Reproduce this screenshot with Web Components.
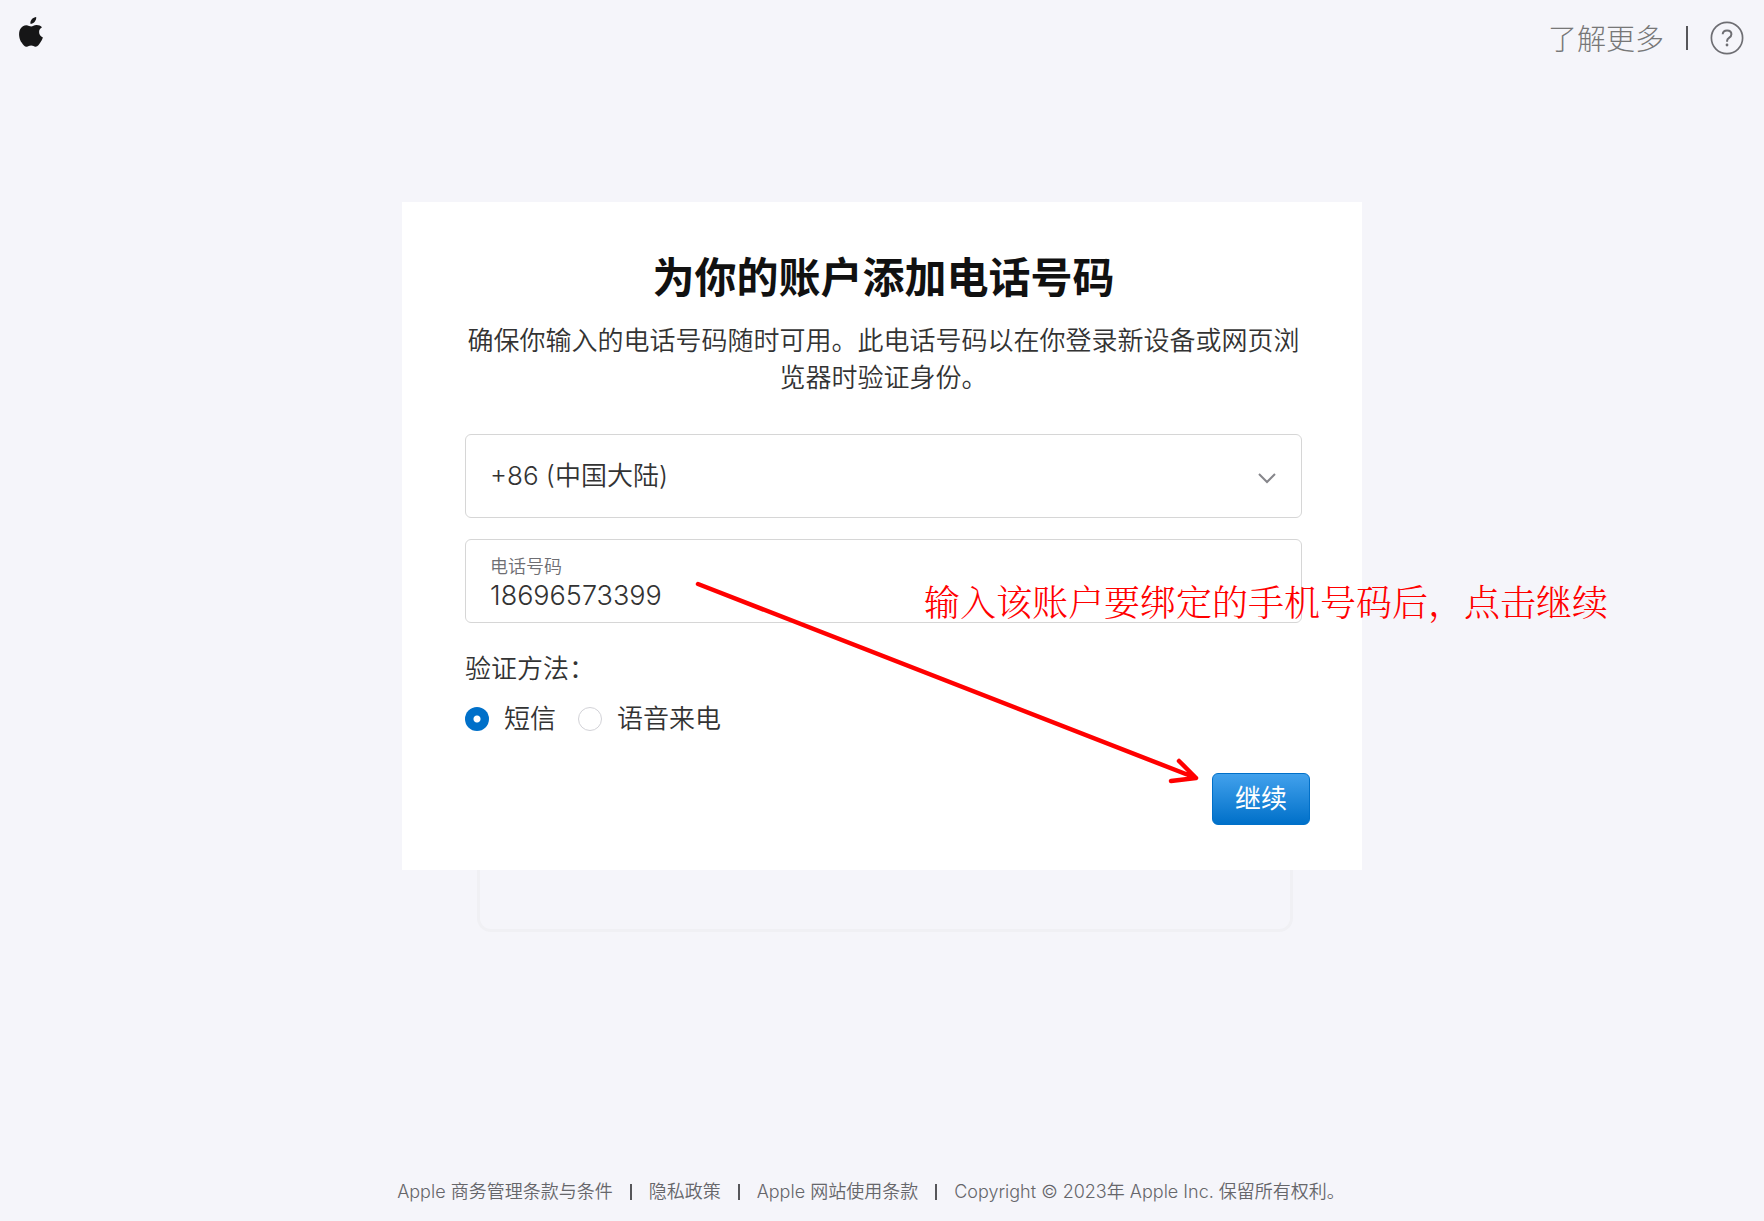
<!DOCTYPE html>
<html lang="zh-CN">
<head>
<meta charset="utf-8">
<meta name="viewport" content="width=device-width, initial-scale=1">
<title>为你的账户添加电话号码</title>
<style>
  html { background: #f5f5fa; }
  body { margin: 0; font-family: Inter, "Noto Sans CJK SC", sans-serif; font-weight: 350; color: #333; }
</style>
</head>
<body>
<phone-page></phone-page>
<script>
const define = (name, html) => {
  const template = document.createElement('template');
  template.innerHTML = html;
  customElements.define(name, class extends HTMLElement {
    constructor() {
      super();
      this.attachShadow({ mode: 'open' }).append(template.content.cloneNode(true));
    }
  });
};

define('site-header', `
<style>
  :host { display: block; }
  header { display: flex; justify-content: space-between; align-items: flex-start; padding: 16px 20px 0 18px; height: 56px; }
  a { color: #777; text-decoration: none; font-weight: 300; }
  .logo svg { display: block; }
  nav { display: flex; align-items: center; gap: 22px; height: 44px; }
  .more { font-size: 29px; line-height: 40px; padding-top: 4px; }
  i { width: 2px; height: 24px; background: #56565a; }
  .help svg { display: block; }
</style>
<header>
  <a class="logo" href="#" aria-label="Apple">
    <svg width="26" height="32" viewBox="0 0 26 32" fill="#161617"><path d="M18.200 1c.2 1.900-.5 3.600-1.700 4.900-1.100 1.200-2.500 1.900-4.100 1.800-.2-1.800.6-3.500 1.600-4.600C15.100 1.900 16.700 1.100 18.200 1zM24 11.200c-1.900 1.100-2.900 2.700-2.900 4.900 0 2.500 1.400 4.300 3.800 5.300-.5 1.700-1.400 3.300-2.400 4.800-1.300 1.900-2.700 4.400-4.800 4.500-1.700.1-2.500-1.100-4.600-1.100s-2.700 1.100-4.500 1.200c-1.900.1-3.500-2.100-4.800-4C1.100 23.100.1 16.900 2.300 12.900c1.300-2.300 3.700-3.700 6-3.700 2 0 3.600 1.300 5 1.300 1.300 0 3-1.500 5.300-1.400 2.200.1 4.100.8 5.400 2.100z"/></svg>
  </a>
  <nav>
    <a class="more" href="#">了解更多</a><i></i>
    <a class="help" href="#" aria-label="帮助">
      <svg width="34" height="34" viewBox="0 0 34 34" fill="none" stroke="#6e6e73"><circle cx="17" cy="17" r="15.600" stroke-width="1.700"/><path d="M12.700 13.300c.1-2.400 1.800-3.800 4.400-3.800 2.500 0 4.300 1.500 4.300 3.700 0 1.700-.8 2.700-2.400 3.700-1.400.9-1.900 1.500-1.900 2.900v1" stroke-width="2"/><circle cx="17" cy="24" r="1.400" fill="#6e6e73" stroke="none"/></svg>
    </a>
  </nav>
</header>`);

define('country-select', `
<style>
  :host { display: grid; align-items: center; border: 1px solid #d6d6d6; border-radius: 6px; background: #fff; }
  select, svg { grid-area: 1 / 1; }
  select { appearance: none; border: 0; background: none; width: 100%; height: 82px; padding: 0 24px 2px; font: inherit; font-size: 26px; color: #333; }
  svg { justify-self: end; margin: 4px 25px 0 0; pointer-events: none; }
</style>
<select aria-label="国家或地区"><option>+86 (中国大陆)</option></select>
<svg width="18" height="12" viewBox="0 0 18 12" fill="none" stroke="#86868b" stroke-width="2"><path d="M1 2l8 8 8-8"/></svg>`);

define('phone-field', `
<style>
  :host { display: block; border: 1px solid #d6d6d6; border-radius: 6px; background: #fff; }
  div { display: flex; flex-direction: column; justify-content: center; height: 82px; box-sizing: border-box; padding: 3px 24px 0; }
  label { font-size: 18px; line-height: 26px; color: #6e6e73; }
  input { border: 0; padding: 0; background: none; font: inherit; font-size: 27px; line-height: 32px; height: 32px; color: #333; outline: 0; }
</style>
<div><label for="phone">电话号码</label><input id="phone" type="tel" value="18696573399"></div>`);

define('radio-group', `
<style>
  :host { display: block; font-size: 26px; }
  fieldset { border: 0; margin: 0; padding: 0; }
  legend { padding: 0; line-height: 38px; margin-bottom: 12px; }
  .row { display: flex; gap: 22px; }
  label { display: flex; align-items: center; gap: 15px; line-height: 38px; }
  input { appearance: none; width: 24px; height: 24px; margin: 0; border: 1px solid #d2d2d7; border-radius: 50%; background: #fff; }
  input:checked { border: 0; background: radial-gradient(circle, #fff 3px, #0070c9 4px); }
</style>
<fieldset>
  <legend>验证方法：</legend>
  <div class="row">
    <label><input type="radio" name="m" checked>短信</label>
    <label><input type="radio" name="m">语音来电</label>
  </div>
</fieldset>`);

define('primary-button', `
<style>
  :host { display: block; }
  button { display: block; width: 98px; height: 52px; padding: 0; border: 1px solid #0070c9; border-radius: 6px; background: linear-gradient(#42a1ec, #0070c9); color: #fff; font: inherit; font-size: 26px; font-weight: 400; line-height: 48px; }
</style>
<button type="button"><slot></slot></button>`);

define('guide-note', `
<style>
  :host { position: absolute; inset: 0; pointer-events: none; color: #f00; }
  svg { position: absolute; left: 289px; top: 375px; overflow: visible; }
  p { position: absolute; left: 522px; top: 373px; margin: 0; font-size: 36px; line-height: 52px; font-weight: 300; font-family: "Noto Serif CJK SC", "Noto Sans CJK SC", serif; white-space: nowrap; }
</style>
<svg width="510" height="206" viewBox="0 0 510 206" fill="none" stroke="#f00" stroke-width="4.500" stroke-linecap="round" stroke-linejoin="round"><path d="M7 7L505 201M488 184l17 17-25 3"/></svg>
<p><slot></slot></p>`);

define('phone-card', `
<style>
  :host { display: block; position: relative; width: 960px; max-width: 100%; background: #fff; }
  .body { padding: 46px 60px 45px 63px; }
  h1 { margin: 0; font-size: 42px; line-height: 60px; font-weight: 700; text-align: center; color: #111; }
  p { margin: 14px 0 38px; font-size: 26px; line-height: 37px; text-align: center; }
  phone-field { margin: 21px 0 27px; }
  .actions { display: flex; justify-content: flex-end; margin: 35px -8px 0 0; }
</style>
<div class="body">
  <h1>为你的账户添加电话号码</h1>
  <p>确保你输入的电话号码随时可用。此电话号码以在你登录新设备或网页浏览器时验证身份。</p>
  <country-select></country-select>
  <phone-field></phone-field>
  <radio-group></radio-group>
  <div class="actions"><primary-button>继续</primary-button></div>
</div>
<guide-note>输入该账户要绑定的手机号码后，点击继续</guide-note>`);

define('site-footer', `
<style>
  :host { display: block; }
  footer { display: flex; justify-content: center; align-items: center; gap: 17px; padding: 0 22px 16px 0; font-size: 18px; line-height: 26px; color: #66666a; }
  a { color: inherit; text-decoration: none; }
  a, span { white-space: nowrap; }
  i { width: 2px; height: 16px; background: #56565a; }
</style>
<footer>
  <a href="#">Apple 商务管理条款与条件</a><i></i>
  <a href="#">隐私政策</a><i></i>
  <a href="#">Apple 网站使用条款</a><i></i>
  <span>Copyright © 2023年 Apple Inc. 保留所有权利。</span>
</footer>`);

define('phone-page', `
<style>
  :host { display: flex; flex-direction: column; min-height: 100vh; }
  main { flex: 1; display: flex; flex-direction: column; align-items: center; padding-top: 130px; }
  .under { width: 960px; max-width: 100%; box-sizing: border-box; padding: 0 69px 0 75px; }
  .panel { height: 62px; box-sizing: border-box; border: 3px solid #f0f0f4; border-top: 0; border-radius: 0 0 14px 14px; }
</style>
<site-header></site-header>
<main><phone-card></phone-card><div class="under"><div class="panel"></div></div></main>
<site-footer></site-footer>`);
</script>
</body>
</html>
